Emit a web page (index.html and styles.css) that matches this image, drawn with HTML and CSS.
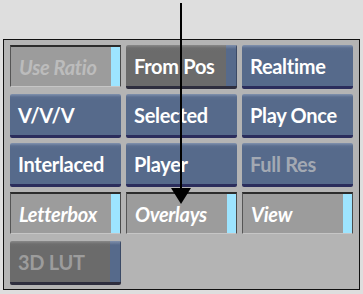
FILE: index.html
```html
<!DOCTYPE html>
<html lang="en">
<head>
    <meta charset="UTF-8">
    <meta name="viewport" content="width=device-width, initial-scale=1.0">
    <title>Player Options</title>
    <link rel="stylesheet" href="styles.css">
</head>
<body>
    <div class="panel">
        <div class="btn toggle disabled">Use Ratio</div>
        <div class="btn grey">From Pos</div>
        <div class="btn">Realtime</div>

        <div class="btn">V/V/V</div>
        <div class="btn">Selected</div>
        <div class="btn">Play Once</div>

        <div class="btn">Interlaced</div>
        <div class="btn">Player</div>
        <div class="btn dim">Full Res</div>

        <div class="btn toggle">Letterbox</div>
        <div class="btn toggle">Overlays</div>
        <div class="btn toggle">View</div>

        <div class="btn grey dim">3D LUT</div>
    </div>

    <svg class="pointer" width="363" height="294" viewBox="0 0 363 294">
        <line x1="181" y1="3" x2="181" y2="190" stroke="#000" stroke-width="2"/>
        <polygon points="171,188 191,188 181,204" fill="#000"/>
    </svg>
</body>
</html>
```

FILE: styles.css
```css
body {
    background-color: #dedede;
    margin: 0;
    font-family: Lato, "Liberation Sans", sans-serif;
}
.panel {
    margin: 39px 0 0 3px;
    width: 357px;
    height: 251px;
    box-sizing: border-box;
    border: 1px solid #111111;
    background-color: #b4b4b4;
    padding: 5px 6px 4px 6px;
    display: grid;
    grid-template-columns: repeat(3, 111px);
    grid-auto-rows: 44px;
    column-gap: 5px;
    row-gap: 5px;
}
.btn {
    box-sizing: border-box;
    height: 44px;
    display: flex;
    align-items: center;
    padding: 0 0 0 8px;
    font-size: 20px;
    letter-spacing: -0.3px;
    font-weight: bold;
    color: #ffffff;
    white-space: nowrap;
    background: linear-gradient(#8192ae 0, #5b6e8f 3px, #566a8b 6px);
    border-bottom: 3px solid #2b2d5c;
    border-radius: 2px;
}
.btn.dim {
    color: #a3a9b3;
}
.btn.grey {
    background:
        linear-gradient(#7f90ac 0, #566a8b 4px) right top / 11px 100% no-repeat,
        linear-gradient(#888888 0, #6e6e6e 3px, #6b6b6b 6px);
    border-bottom: 3px solid #2e2e3e;
    box-shadow: inset -11px 0 0 -10px #3b4a66;
}
.btn.grey.dim {
    color: #9c9c9c;
}
.toggle {
    height: 42px;
    border-radius: 0;
    font-style: italic;
    background: linear-gradient(#9de4ff, #9de4ff) right top / 9px 100% no-repeat, #9c9c9c;
    border-top: 2px solid #2c2c2c;
    border-left: 1px solid #555555;
    border-right: 1px solid #4a4a4a;
    border-bottom: 1px solid #c6c6c6;
}
.toggle.disabled {
    color: #bcbcbc;
}
.pointer {
    position: absolute;
    left: 0;
    top: 0;
    pointer-events: none;
}
```
